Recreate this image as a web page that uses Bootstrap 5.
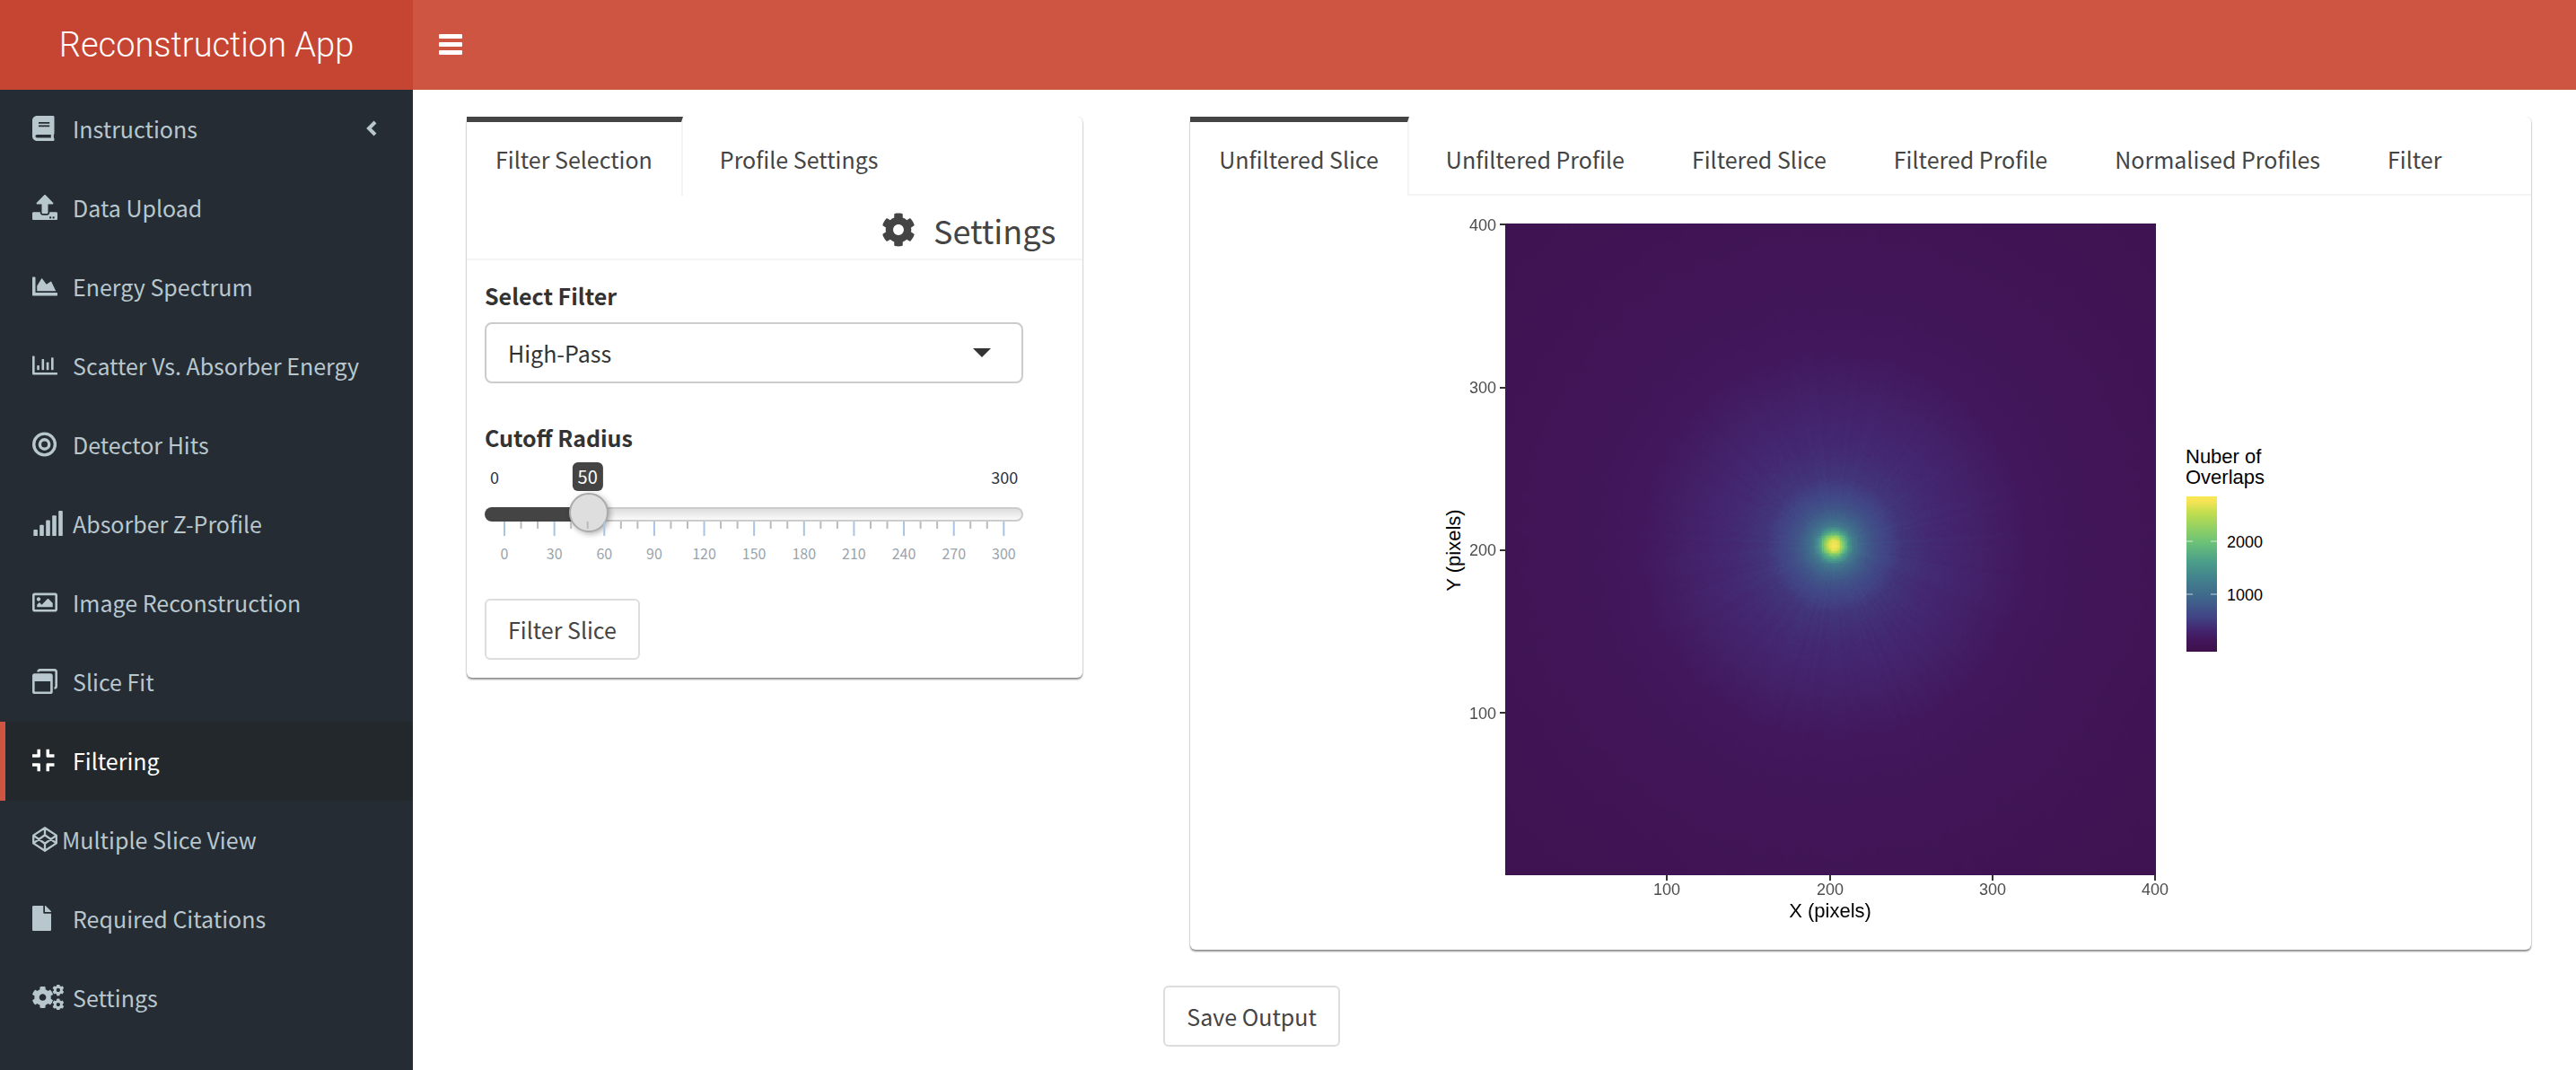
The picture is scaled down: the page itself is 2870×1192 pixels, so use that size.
<!DOCTYPE html>
<html lang="en">
<head>
<meta charset="utf-8">
<meta name="viewport" content="width=device-width, initial-scale=1">
<title>Reconstruction App</title>
<link href="https://cdn.jsdelivr.net/npm/bootstrap@5.3.0/dist/css/bootstrap.min.css" rel="stylesheet">
<style>
  body { font-family: "Noto Sans CJK SC", "Noto Sans", sans-serif; font-size: 25px; line-height: 40px; color: #444; background: #fff; }
  .brand-box { width: 460px; height: 100px; background: #c64532; color: #fff; font-family: Roboto, "Liberation Sans", sans-serif; font-weight: 300; font-size: 38px; }
  .brand-box:hover { color: #fff; }
  .top-strip { height: 100px; background: #ce5542; padding-left: 29px; }
  .menu-toggle { color: #fff; line-height: 1; }
  .side-menu { width: 460px; min-height: calc(100vh - 100px); background: #252c33; }
  .side-menu .nav-link { height: 88px; padding: 0 40px 2px 30px; border-left: 6px solid transparent; color: #b8c7ce; }
  .side-menu .nav-link.active { background: #22282b; border-left-color: #ce5542; color: #fff; }
  .side-icon { width: 45px; flex: none; display: flex; }
  .side-icon.tight { width: 33px; }
  svg { display: block; fill: currentColor; }
  .icon { height: 28px; width: auto; }
  .pane-left { padding: 30px 57px 0 60px; }
  .pane-right { padding: 30px 50px 0 33px; }
  .tab-card { border-radius: 6px; box-shadow: 0 2px 2px rgba(0,0,0,.42), 0 0 2px rgba(0,0,0,.2); background: #fff; clip-path: inset(0 -4px -6px -4px); }
  .plot-card { margin-left: 30px; }
  .tab-strip .nav-link { height: 88px; padding: 0 32px; border: 0; border-top: 6px solid transparent; border-right: 2px solid transparent; border-radius: 0; color: #444; margin-right: 9px; }
  .tab-strip .nav-link.active { border-top-color: #444; border-right-color: #f4f4f4; background: #fff; color: #444; }
  .tab-strip.ruled { box-shadow: inset 0 -2px #f4f4f4; }
  .pane-title { font-size: 36px; line-height: 40px; height: 72px; padding: 5px 30px 0 0; gap: 20px; border-bottom: 2px solid #f4f4f4; }
  .pane-title .icon { height: 38px; }
  .form-area { padding: 19px 66px 20px 20px; }
  .form-label { font-weight: 700; color: #333; margin-bottom: 10px; display: block; }
  .form-label.second { margin: 40px 0 8px; }
  .form-select { height: 68px; padding: 0 60px 0 24px; border: 2px solid #ccc; border-radius: 8px; font-size: 25px; color: #333; line-height: 40px;
    background-image: url("data:image/svg+xml,%3csvg xmlns='http://www.w3.org/2000/svg' viewBox='0 0 20 10'%3e%3cpath fill='%23333' d='M0 0h20L10 10z'/%3e%3c/svg%3e"); background-size: 20px 10px; background-position: right 34px center; }
  .btn-plain { height: 68px; padding: 0 24px; font-size: 25px; line-height: 40px; border: 2px solid #ddd; border-radius: 6px; background: #fff; color: #444; }
  .form-area .btn-plain { margin-top: 32px; }
  .range-ends { font-size: 18px; line-height: 32px; color: #333; padding: 0 6px; position: relative; }
  .range-value { position: absolute; top: 0; transform: translateX(-50%); background: #444; color: #fff; border-radius: 6px; padding: 0 6px; font-size: 20px; }
  .range-input { -webkit-appearance: none; appearance: none; display: block; width: 100%; height: 44px; margin: 4px 0 0; background: transparent; }
  .range-input::-webkit-slider-runnable-track { height: 16px; border-radius: 8px; border: 2px solid transparent;
    background: linear-gradient(90deg, #444 19%, transparent 19%) border-box, linear-gradient(#dedede, #fafafa) padding-box, linear-gradient(#ccc, #ccc) border-box; }
  .range-input::-webkit-slider-thumb { -webkit-appearance: none; width: 44px; height: 44px; margin-top: -18px; border-radius: 50%; border: 2px solid #ababab; background: #dedede; box-shadow: 2px 2px 6px rgba(0,0,0,.3); }
  .range-scale { padding: 0 22px; margin-top: -14px; }
  .range-scale svg { width: 100%; height: 54px; overflow: visible; }
  .range-scale text { font-size: 16px; fill: #99a4ac; text-anchor: middle; }
  .plot { width: 926px; max-width: 100%; height: auto; overflow: visible; font-family: "Liberation Sans", Arial, sans-serif; }
  .plot canvas { display: block; width: 725px; height: 726px; image-rendering: pixelated; }
  .tick-text { font-size: 18px; fill: #4d4d4d; }
  .axis-text { font-size: 22px; fill: #000; }
  .key-text { font-size: 18px; fill: #000; }
  .save-row { padding-top: 40px; }
</style>
</head>
<body>
<svg width="0" height="0" class="position-absolute" aria-hidden="true">
  <defs>
    <path id="cog" d="M487.4 315.7l-42.6-24.6c4.3-23.2 4.3-47 0-70.2l42.6-24.6c4.9-2.8 7.1-8.6 5.5-14-11.1-35.6-30-67.8-54.7-94.6-3.8-4.1-10-5.1-14.8-2.3L380.8 110c-17.9-15.4-38.5-27.3-60.8-35.1V25.8c0-5.6-3.9-10.5-9.4-11.7-36.7-8.2-74.3-7.8-109.2 0-5.5 1.2-9.4 6.1-9.4 11.7V75c-22.2 7.9-42.8 19.8-60.8 35.1L88.700 85.500c-4.900-2.800-11-1.900-14.800 2.300-24.700 26.700-43.600 58.900-54.700 94.600-1.700 5.400.6 11.200 5.500 14L67.300 221c-4.300 23.200-4.300 47 0 70.200l-42.600 24.600c-4.900 2.800-7.100 8.600-5.500 14 11.100 35.600 30 67.800 54.700 94.600 3.800 4.100 10 5.100 14.800 2.300l42.600-24.600c17.900 15.400 38.500 27.300 60.800 35.100v49.200c0 5.600 3.900 10.500 9.400 11.700 36.700 8.200 74.300 7.800 109.200 0 5.500-1.200 9.400-6.100 9.400-11.700v-49.200c22.200-7.900 42.800-19.800 60.800-35.100l42.600 24.600c4.900 2.800 11 1.900 14.800-2.300 24.700-26.700 43.600-58.900 54.700-94.600 1.500-5.500-.7-11.300-5.600-14.100zM256 336c-44.100 0-80-35.900-80-80s35.900-80 80-80 80 35.900 80 80-35.900 80-80 80z"/>
  </defs>
</svg>

<header class="d-flex">
  <a href="#" class="brand-box d-flex align-items-center justify-content-center text-decoration-none flex-shrink-0">Reconstruction App</a>
  <nav class="top-strip flex-grow-1 d-flex align-items-center">
    <button type="button" class="menu-toggle btn p-0 border-0" aria-label="Toggle navigation">
      <svg width="26" height="24" viewBox="0 0 26 24"><rect width="26" height="5" y="0" rx="1"/><rect width="26" height="5" y="9" rx="1"/><rect width="26" height="5" y="18" rx="1"/></svg>
    </button>
  </nav>
</header>

<div class="d-flex">
  <aside class="side-menu flex-shrink-0">
    <nav class="nav flex-column">
      <a class="nav-link d-flex align-items-center" href="#">
        <span class="side-icon"><svg class="icon" viewBox="0 0 448 512"><path d="M448 360V24c0-13.3-10.7-24-24-24H96C43 0 0 43 0 96v320c0 53 43 96 96 96h328c13.3 0 24-10.7 24-24v-16c0-7.5-3.5-14.3-8.9-18.7-4.2-15.4-4.2-59.3 0-74.7 5.4-4.3 8.9-11.1 8.9-18.6zM128 134c0-3.3 2.7-6 6-6h212c3.3 0 6 2.7 6 6v20c0 3.3-2.7 6-6 6H134c-3.3 0-6-2.7-6-6v-20zm0 64c0-3.3 2.7-6 6-6h212c3.3 0 6 2.7 6 6v20c0 3.3-2.7 6-6 6H134c-3.3 0-6-2.7-6-6v-20zm253.4 250H96c-17.7 0-32-14.3-32-32 0-17.6 14.4-32 32-32h285.4c-1.9 17.1-1.9 46.9 0 64z"/></svg></span>
        <span>Instructions</span>
        <svg class="ms-auto" width="13" height="18" viewBox="0 0 13 18"><path d="M11 2L4 9l7 7" fill="none" stroke="currentColor" stroke-width="4"/></svg>
      </a>
      <a class="nav-link d-flex align-items-center" href="#">
        <span class="side-icon"><svg class="icon" viewBox="0 0 512 512"><path d="M296 384h-80c-13.3 0-24-10.7-24-24V192h-87.7c-17.8 0-26.7-21.5-14.1-34.1L242.3 5.7c7.5-7.5 19.8-7.5 27.3 0l152.2 152.2c12.6 12.6 3.7 34.1-14.1 34.1H320v168c0 13.3-10.7 24-24 24zm216-8v112c0 13.3-10.7 24-24 24H24c-13.3 0-24-10.7-24-24V376c0-13.3 10.7-24 24-24h136v8c0 30.9 25.1 56 56 56h80c30.9 0 56-25.1 56-56v-8h136c13.3 0 24 10.7 24 24zm-124 88c0-11-9-20-20-20s-20 9-20 20 9 20 20 20 20-9 20-20zm64 0c0-11-9-20-20-20s-20 9-20 20 9 20 20 20 20-9 20-20z"/></svg></span>
        <span>Data Upload</span>
      </a>
      <a class="nav-link d-flex align-items-center" href="#">
        <span class="side-icon"><svg class="icon" viewBox="0 0 512 512"><path d="M500 384c6.600 0 12 5.400 12 12v40c0 6.600-5.400 12-12 12H12c-6.600 0-12-5.400-12-12V76c0-6.600 5.400-12 12-12h40c6.600 0 12 5.400 12 12v308h436zM372.700 159.500L288 216l-85.300-113.700c-5.100-6.800-15.500-6.300-19.900 1L96 248v104h384l-89.900-187.800c-3.200-6.500-11.400-8.700-17.400-4.700z"/></svg></span>
        <span>Energy Spectrum</span>
      </a>
      <a class="nav-link d-flex align-items-center" href="#">
        <span class="side-icon"><svg class="icon" viewBox="0 0 512 512"><path d="M12 64h24c7 0 12 5 12 12v324h452c7 0 12 5 12 12v24c0 7-5 12-12 12H24c-13 0-24-11-24-24V76c0-7 5-12 12-12z"/><rect x="96" y="256" width="48" height="96" rx="12"/><rect x="192" y="128" width="48" height="224" rx="12"/><rect x="288" y="192" width="48" height="160" rx="12"/><rect x="384" y="96" width="48" height="256" rx="12"/></svg></span>
        <span>Scatter Vs. Absorber Energy</span>
      </a>
      <a class="nav-link d-flex align-items-center" href="#">
        <span class="side-icon"><svg class="icon" viewBox="0 0 496 512"><g fill="none" stroke="currentColor" stroke-width="62"><circle cx="248" cy="256" r="217"/><circle cx="248" cy="256" r="95"/></g></svg></span>
        <span>Detector Hits</span>
      </a>
      <a class="nav-link d-flex align-items-center" href="#">
        <span class="side-icon"><svg class="icon" viewBox="0 0 640 512"><rect x="24" y="384" width="84" height="128" rx="16"/><rect x="150" y="288" width="84" height="224" rx="16"/><rect x="278" y="192" width="84" height="320" rx="16"/><rect x="406" y="96" width="84" height="416" rx="16"/><rect x="534" y="0" width="84" height="512" rx="16"/></svg></span>
        <span>Absorber Z-Profile</span>
      </a>
      <a class="nav-link d-flex align-items-center" href="#">
        <span class="side-icon"><svg class="icon" viewBox="0 0 512 512"><path d="M464 64H48C21.490 64 0 85.490 0 112v288c0 26.510 21.490 48 48 48h416c26.510 0 48-21.490 48-48V112c0-26.510-21.490-48-48-48zm-6 336H54a6 6 0 0 1-6-6V118a6 6 0 0 1 6-6h404a6 6 0 0 1 6 6v276a6 6 0 0 1-6 6zM128 152c-22.091 0-40 17.909-40 40s17.909 40 40 40 40-17.909 40-40-17.909-40-40-40zM96 352h320v-80l-87.515-87.515c-4.686-4.686-12.284-4.686-16.971 0L192 304l-39.515-39.515c-4.686-4.686-12.284-4.686-16.971 0L96 304v48z"/></svg></span>
        <span>Image Reconstruction</span>
      </a>
      <a class="nav-link d-flex align-items-center" href="#">
        <span class="side-icon"><svg class="icon" viewBox="0 0 512 512"><path fill-rule="evenodd" d="M48 96h320a48 48 0 0 1 48 48v320a48 48 0 0 1-48 48H48a48 48 0 0 1-48-48V144a48 48 0 0 1 48-48zM48 256v202a6 6 0 0 0 6 6h308a6 6 0 0 0 6-6V256z"/><path d="M96 64a64 64 0 0 1 64-64h288a64 64 0 0 1 64 64v288a64 64 0 0 1-64 64v-48a16 16 0 0 0 16-16V64a16 16 0 0 0-16-16H160a16 16 0 0 0-16 16z"/></svg></span>
        <span>Slice Fit</span>
      </a>
      <a class="nav-link active d-flex align-items-center" href="#" aria-current="page">
        <span class="side-icon"><svg class="icon" viewBox="0 0 448 512"><path d="M0 132h100V32h64v140a24 24 0 0 1-24 24H0zM448 132H348V32h-64v140a24 24 0 0 0 24 24h140zM0 380h100v100h64V340a24 24 0 0 0-24-24H0zM448 380H348v100h-64V340a24 24 0 0 1 24-24h140z"/></svg></span>
        <span>Filtering</span>
      </a>
      <a class="nav-link d-flex align-items-center" href="#">
        <span class="side-icon tight"><svg class="icon" viewBox="0 0 512 512"><path fill="none" stroke="currentColor" stroke-width="42" stroke-linejoin="round" d="M256 22L490 176v160L256 490 22 336V176zM256 22v148M256 342v148M22 176l234 166 234-166M22 336l234-166 234 166"/></svg></span>
        <span>Multiple Slice View</span>
      </a>
      <a class="nav-link d-flex align-items-center" href="#">
        <span class="side-icon"><svg class="icon" viewBox="0 0 384 512"><path d="M224 136V0H24C10.700 0 0 10.700 0 24v464c0 13.300 10.700 24 24 24h336c13.300 0 24-10.700 24-24V160H248c-13.200 0-24-10.800-24-24zm160-14.100v6.100H256V0h6.100c6.400 0 12.500 2.500 17 7l97.900 98c4.500 4.500 7 10.600 7 16.900z"/></svg></span>
        <span>Required Citations</span>
      </a>
      <a class="nav-link d-flex align-items-center" href="#">
        <span class="side-icon"><svg class="icon" viewBox="0 0 640 512"><use href="#cog" transform="translate(-14 31) scale(.88)"/><use href="#cog" transform="translate(405 -15) scale(.48)"/><use href="#cog" transform="translate(405 281) scale(.48)"/></svg></span>
        <span>Settings</span>
      </a>
    </nav>
  </aside>

  <main class="flex-grow-1">
    <div class="row g-0">
      <section class="col-4 pane-left">
        <div class="tab-card">
          <ul class="nav tab-strip">
            <li class="nav-item"><a class="nav-link active d-flex align-items-center" href="#">Filter Selection</a></li>
            <li class="nav-item"><a class="nav-link d-flex align-items-center" href="#">Profile Settings</a></li>
          </ul>
          <h2 class="pane-title d-flex justify-content-end align-items-center m-0 fw-normal">
            <svg class="icon" viewBox="0 0 512 512"><use href="#cog"/></svg><span>Settings</span>
          </h2>
          <form class="form-area">
            <label class="form-label" for="filterKind">Select Filter</label>
            <select class="form-select" id="filterKind"><option>High-Pass</option><option>Low-Pass</option></select>
            <label class="form-label second" for="cutoff">Cutoff Radius</label>
            <div class="range-ends d-flex justify-content-between">
              <span>0</span><output class="range-value" for="cutoff" style="left:calc(22px + (100% - 44px) / 6)">50</output><span>300</span>
            </div>
            <input class="range-input" type="range" id="cutoff" min="0" max="300" value="50">
            <div class="range-scale">
              <svg id="scale" aria-hidden="true">
                <g id="ticks"></g>
                <text x="0%" y="42">0</text><text x="10%" y="42">30</text><text x="20%" y="42">60</text><text x="30%" y="42">90</text><text x="40%" y="42">120</text><text x="50%" y="42">150</text><text x="60%" y="42">180</text><text x="70%" y="42">210</text><text x="80%" y="42">240</text><text x="90%" y="42">270</text><text x="100%" y="42">300</text>
              </svg>
            </div>
            <button type="button" class="btn btn-plain">Filter Slice</button>
          </form>
        </div>
      </section>

      <section class="col-8 pane-right">
        <div class="tab-card plot-card">
          <ul class="nav tab-strip ruled">
            <li class="nav-item"><a class="nav-link active d-flex align-items-center" href="#">Unfiltered Slice</a></li>
            <li class="nav-item"><a class="nav-link d-flex align-items-center" href="#">Unfiltered Profile</a></li>
            <li class="nav-item"><a class="nav-link d-flex align-items-center" href="#">Filtered Slice</a></li>
            <li class="nav-item"><a class="nav-link d-flex align-items-center" href="#">Filtered Profile</a></li>
            <li class="nav-item"><a class="nav-link d-flex align-items-center" href="#">Normalised Profiles</a></li>
            <li class="nav-item"><a class="nav-link d-flex align-items-center" href="#">Filter</a></li>
          </ul>
          <div class="d-flex justify-content-center py-2">
            <svg class="plot" viewBox="0 0 926 824" role="img" aria-label="Heat map of overlaps">
              <defs>
                <linearGradient id="keyFill" x1="0" y1="1" x2="0" y2="0">
                  <stop offset="0" stop-color="#3d0f4b"/><stop offset=".08" stop-color="#42175c"/><stop offset=".14" stop-color="#43266f"/><stop offset=".22" stop-color="#414385"/><stop offset=".34" stop-color="#3f648b"/><stop offset=".48" stop-color="#43848d"/><stop offset=".58" stop-color="#4b9f8a"/><stop offset=".7" stop-color="#6bc078"/><stop offset=".8" stop-color="#93d163"/><stop offset=".9" stop-color="#c5de4e"/><stop offset=".97" stop-color="#f7e455"/><stop offset="1" stop-color="#f9e756"/>
                </linearGradient>
              </defs>
              <foreignObject x="67" y="23" width="725" height="726"><canvas id="heat" width="400" height="400"></canvas></foreignObject>
              <g stroke="#333" stroke-width="2">
                <path d="M61 24h6M61 206h6M61 387h6M61 568h6M247 749v6M429 749v6M610 749v6M791 749v6"/>
              </g>
              <g class="tick-text" text-anchor="end"><text x="57" y="31">400</text><text x="57" y="212">300</text><text x="57" y="393">200</text><text x="57" y="575">100</text></g>
              <g class="tick-text" text-anchor="middle"><text x="247" y="771">100</text><text x="429" y="771">200</text><text x="610" y="771">300</text><text x="791" y="771">400</text></g>
              <g class="axis-text"><text x="429" y="796" text-anchor="middle">X (pixels)</text><text transform="translate(17 387) rotate(-90)" text-anchor="middle">Y (pixels)</text>
                <text x="825" y="290">Nuber of</text><text x="825" y="313">Overlaps</text></g>
              <rect x="826" y="327" width="34" height="173" fill="url(#keyFill)"/>
              <path d="M826 377h7M853 377h7M826 436h7M853 436h7" stroke="#fff" stroke-opacity=".7" stroke-width="1"/>
              <g class="key-text"><text x="871" y="384">2000</text><text x="871" y="443">1000</text></g>
            </svg>
          </div>
        </div>
        <div class="save-row"><button type="button" class="btn btn-plain">Save Output</button></div>
      </section>
    </div>
  </main>
</div>

<script src="https://cdn.jsdelivr.net/npm/bootstrap@5.3.0/dist/js/bootstrap.bundle.min.js"></script>
<script>
  // Slider scale: a long tick each 30, a short one each 10
  const ticks = document.getElementById('ticks');
  for (let v = 0; v <= 300; v += 10) {
    const l = document.createElementNS('http://www.w3.org/2000/svg', 'line');
    const x = (v / 3) + '%', major = v % 30 === 0;
    l.setAttribute('x1', x); l.setAttribute('x2', x);
    l.setAttribute('y1', 0); l.setAttribute('y2', major ? 16 : 8);
    l.setAttribute('stroke', major ? '#a9c4e0' : '#bbb');
    l.setAttribute('stroke-width', 2);
    ticks.appendChild(l);
  }

  // Heat map: intensity falls with the distance (in cells) from the source
  const stops = [[0,61,15,75],[.05,64,20,84],[.08,66,23,92],[.14,67,38,111],[.22,65,67,133],[.34,63,100,139],[.48,67,132,141],[.58,75,159,138],[.7,107,192,120],[.8,147,209,99],[.9,197,222,78],[1,249,231,86]];
  const falloff = [[0,1],[3,.95],[5,.82],[7,.68],[9,.57],[12,.44],[16,.36],[22,.29],[30,.235],[42,.18],[60,.15],[85,.125],[105,.1],[120,.08],[150,.068],[200,.055],[300,.03]];
  const pick = (tab, x, k) => {
    let i = 1;
    while (i < tab.length - 1 && tab[i][0] < x) i++;
    const a = tab[i - 1], b = tab[i], t = Math.max(0, Math.min(1, (x - a[0]) / (b[0] - a[0])));
    return a[k] + (b[k] - a[k]) * t;
  };
  let seed = 7;
  const rnd = () => (seed = (seed * 16807) % 2147483647) / 2147483647 - .5;
  const rays = Array.from({ length: 180 }, rnd);
  const ctx = document.getElementById('heat').getContext('2d');
  const img = ctx.createImageData(400, 400);
  for (let y = 0; y < 400; y++) for (let x = 0; x < 400; x++) {
    const dx = x - 201.5, dy = y - 197, r = Math.hypot(dx, dy);
    const ray = rays[Math.floor((Math.atan2(dy, dx) + Math.PI) / (2 * Math.PI) * 179.99)];
    const amp = r < 12 ? .02 : r < 125 ? .014 * (1 - r / 180) : .002;
    const v = pick(falloff, r, 1) + rnd() * amp + ray * amp;
    const o = (y * 400 + x) * 4;
    for (let k = 0; k < 3; k++) img.data[o + k] = pick(stops, v, k + 1);
    img.data[o + 3] = 255;
  }
  ctx.putImageData(img, 0, 0);
</script>
</body>
</html>
